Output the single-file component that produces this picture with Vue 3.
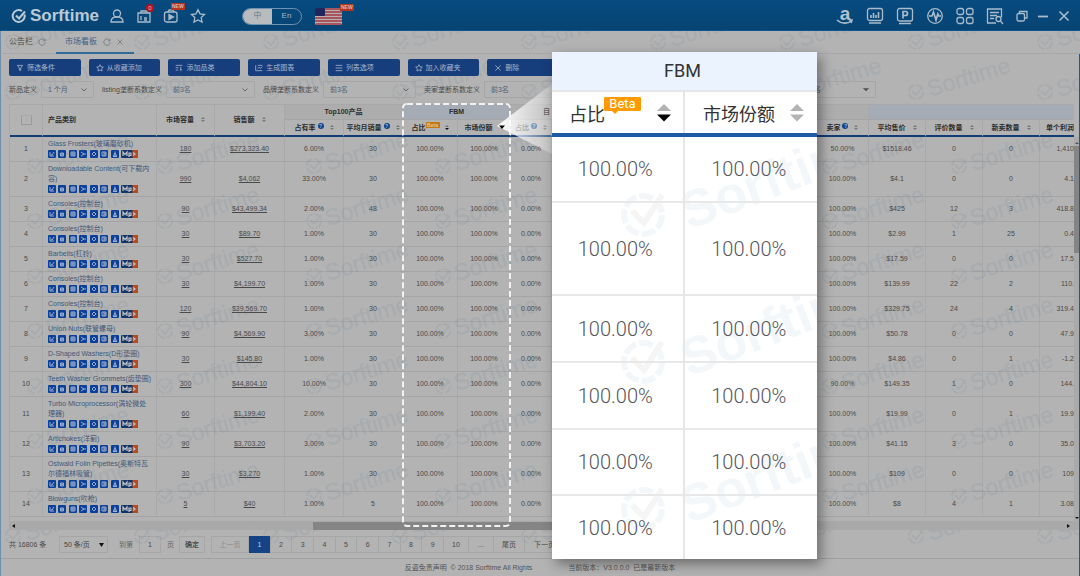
<script setup>
import { ref } from 'vue'

const lang = ref('zh')
const goPage = ref('1')

const tools = [
  { label: '筛选条件', icon: 'M2 2h8L7 6v4L5 9V6z' },
  { label: '从收藏添加', icon: 'M6 1l1.5 3.2 3.5.5-2.5 2.4.6 3.4L6 8.9l-3.1 1.6.6-3.4L1 4.7l3.5-.5z' },
  { label: '添加品类', icon: 'M1 2h10M1 5.500h4M1 9h4M8.500 4v6M8.500 10l2-2' },
  { label: '生成图表', icon: 'M1 2v8h10M4 2h7M4 7l2-2 2 1.500 3-2.500' },
  { label: '列表选项', icon: 'M1 2h10M1 6h10M1 10h10' },
  { label: '加入收藏夹', icon: 'M6 1l1.5 3.2 3.5.5-2.500 2.400.6 3.400L6 8.900l-3.100 1.600.6-3.400L1 4.700l3.500-.5z' },
  { label: '删除', icon: 'M2 2l8 8M10 2l-8 8' }
]

const filters = [
  { id: 'new', label: '新品定义', value: '1 个月', size: 'short' },
  { id: 'listing', label: 'listing垄断系数定义', value: '前3名', size: 'mid' },
  { id: 'brand', label: '品牌垄断系数定义', value: '前3名', size: 'long' },
  { id: 'seller', label: '卖家垄断系数定义', value: '前3名', size: 'long' }
]

const rows = [
  [['Glass Frosters(玻璃磨砂机)'], '180', '$273,323.40', '6.00%', '30', '50.00%', '$1518.46', '0', '0', '1,410'],
  [['Downloadable Content(可下载内', '容)'], '990', '$4,062', '33.00%', '30', '100.00%', '$4.1', '0', '0', '4.1'],
  [['Consoles(控制台)'], '90', '$43,499.34', '2.00%', '48', '100.00%', '$425', '12', '3', '418.8'],
  [['Consoles(控制台)'], '30', '$89.70', '1.00%', '30', '100.00%', '$2.99', '1', '25', '0.4'],
  [['Barbells(杠铃)'], '30', '$527.70', '1.00%', '30', '100.00%', '$17.59', '0', '0', '17.5'],
  [['Consoles(控制台)'], '30', '$4,199.70', '1.00%', '30', '100.00%', '$139.99', '22', '2', '110.'],
  [['Consoles(控制台)'], '120', '$39,569.70', '1.00%', '30', '100.00%', '$329.75', '24', '4', '319.4'],
  [['Union Nuts(联管螺母)'], '90', '$4,569.90', '3.00%', '30', '100.00%', '$50.78', '0', '0', '47.9'],
  [['D-Shaped Washers(D形垫圈)'], '30', '$145.80', '1.00%', '30', '100.00%', '$4.86', '0', '1', '-1.2'],
  [['Teeth Washer Grommets(齿垫圈)'], '300', '$44,804.10', '10.00%', '30', '90.00%', '$149.35', '1', '0', '144.'],
  [['Turbo Microprocessor(涡轮微处', '理器)'], '60', '$1,199.40', '2.00%', '30', '100.00%', '$19.99', '0', '1', '19.9'],
  [['Artichokes(洋蓟)'], '90', '$3,703.20', '3.00%', '30', '100.00%', '$41.15', '3', '0', '35.0'],
  [['Ostwald Folin Pipettes(奥斯特瓦', '尔德福林吸管)'], '30', '$3,270', '1.00%', '30', '100.00%', '$109', '0', '0', '109'],
  [['Blowguns(吹枪)'], '5', '$40', '1.00%', '5', '100.00%', '$8', '4', '1', '3.08']
]

const rowIcons = [
  'M2 2v4h4M3 4.500l1 .5 2-3',
  'M2.500 3h3v3h-3zM3 4h2M3 5h2',
  'M2 2h4v4H2zM2 4h4M4 2v4',
  'M2 2l3 2-3 2M4 4h3',
  'M4 2l2 2-2 2-2-2z',
  'M2 2h4v4H2zM4 2v4M4 4h2',
  'M4 1.500v3M2.500 6l1.500-3 1.500 3zM2 6.500h4'
]

const pages = [1, 2, 3, 4, 5, 6, 7, 8, 9]
const zoomRows = ['r66', 'r93', 'r67', 'r67', 'r66', 'r63']
</script>

<template>
  <div class="app">
    <svg class="defs" aria-hidden="true">
      <defs>
        <g id="wm-unit" opacity="0.08">
          <circle cx="12" cy="38" r="7" fill="none" stroke="#28587c" stroke-width="2" stroke-dasharray="9 2" />
          <path d="M8 37l4 4 7-9" fill="none" stroke="#28587c" stroke-width="2" />
          <text x="0" y="0" transform="translate(26 43) rotate(-17)" font-family="Liberation Sans, Arial, sans-serif" font-size="23" fill="#28587c" stroke="#28587c" stroke-width="0.500">Sorftime</text>
        </g>
        <pattern id="wm-left" x="13" y="-9" width="130" height="55" patternUnits="userSpaceOnUse"><use href="#wm-unit" /></pattern>
        <pattern id="wm-right" x="17" y="-9" width="129" height="55" patternUnits="userSpaceOnUse"><use href="#wm-unit" /></pattern>
        <pattern id="wm-tabs" x="0" y="-27" width="129" height="55" patternUnits="userSpaceOnUse"><use href="#wm-unit" /></pattern>
        <pattern id="wm-bar" x="0" y="0" width="129" height="55" patternUnits="userSpaceOnUse"><use href="#wm-unit" /></pattern>
        <pattern id="wm-pager" x="0" y="-32" width="129" height="55" patternUnits="userSpaceOnUse"><use href="#wm-unit" /></pattern>
        <pattern id="wm-zoom" x="0" y="0" width="400" height="147" patternUnits="userSpaceOnUse">
          <g opacity="0.06" fill="none" stroke="#28709c">
            <circle cx="91" cy="78" r="19" stroke-width="6" stroke-dasharray="14 3" />
            <path d="M80 74l12 12 18-28" stroke="#556" stroke-width="6" />
            <text transform="translate(137 93) rotate(-21)" font-family="Liberation Sans, Arial, sans-serif" font-weight="700" font-size="52" fill="#28709c" stroke="none">Sorftime</text>
          </g>
        </pattern>
      </defs>
    </svg>

    <header class="top">
      <div class="brand">
        <svg width="16" height="16" viewBox="0 0 16 16" fill="none" stroke="#bccad5" stroke-width="2">
          <path d="M13.500 6.500A6 6 0 1 1 11 3" /><path d="M5 7.500l3 3 6-7" />
        </svg>
        <span class="brand-name">Sorftime</span>
      </div>
      <nav class="quick" aria-label="快捷入口">
        <button type="button" aria-label="用户">
          <svg width="16" height="16" viewBox="0 0 16 16"><circle cx="8" cy="5.500" r="3.500" /><path d="M2 14c0-3 2-4.500 4-5h4c2 .5 4 2 4 5z" /></svg>
        </button>
        <button type="button" aria-label="消息">
          <svg width="16" height="16" viewBox="0 0 16 16"><path d="M2 5h12v9H2zM5 5V3h6v2M5 8v4M8 10h3M8 12h3" /></svg>
          <span class="count">0</span>
        </button>
        <button type="button" aria-label="视频">
          <svg width="16" height="16" viewBox="0 0 16 16"><rect x="1.500" y="4" width="12.500" height="10" rx="2" /><path d="M5 4l1-2h4l1 2" /><path d="M6 6.500l4.500 2.500L6 11.500z" fill="#a9bccb" /></svg>
          <span class="new">NEW</span>
        </button>
        <button type="button" aria-label="收藏">
          <svg width="16" height="16" viewBox="0 0 16 16"><path d="M8 1.800l2 4.100 4.500.6-3.300 3.100.8 4.400L8 11.900 4 14l.8-4.400L1.500 6.500 6 5.900z" /></svg>
        </button>
      </nav>
      <div class="lang">
        <button type="button" :class="{ on: lang === 'zh' }" @click="lang = 'zh'">中</button>
        <button type="button" :class="{ on: lang === 'en' }" @click="lang = 'en'">En</button>
      </div>
      <button type="button" class="flag" aria-label="美国站">
        <svg width="27" height="17" viewBox="0 0 27 17">
          <rect width="27" height="17" rx="2" fill="#b6b0b2" />
          <path d="M1 1h25M0 4h27M0 7h27M0 10h27M0 13h27M1 16h25" stroke="#a5343f" stroke-width="1.500" />
          <rect width="10" height="8" rx="1" fill="#20265c" />
        </svg>
        <span class="new">NEW</span>
      </button>
      <nav class="apps" aria-label="工具">
        <button type="button" aria-label="Amazon">
          <span class="amz">a</span>
          <svg class="smile" width="18" height="6" viewBox="0 0 18 6"><path d="M1 1c4 4 11 4 14 1M13 1l3 0-1 3" /></svg>
        </button>
        <button type="button" aria-label="图表"><svg width="18" height="18" viewBox="0 0 18 18"><rect x="1.500" y="1.500" width="15" height="12" rx="2" /><path d="M3 16h12M5 11V8M7.500 11V6M10 11V8M12.500 11V5" stroke-width="1.600" /></svg></button>
        <button type="button" aria-label="产品"><svg width="18" height="18" viewBox="0 0 18 18"><rect x="1.500" y="1.500" width="15" height="12.500" rx="2" /><path d="M3 16.500h12M7 11.500V4.500h2.500a2 2 0 0 1 0 4H7" stroke-width="1.700" /></svg></button>
        <button type="button" aria-label="监控"><svg width="18" height="18" viewBox="0 0 18 18"><circle cx="9" cy="9" r="7.300" /><path d="M3 9h3l1.500-4L10 13l1.800-6 1 2H15" stroke-width="1.700" /></svg></button>
        <button type="button" aria-label="应用"><svg width="18" height="18" viewBox="0 0 18 18"><rect x="1" y="1.500" width="6.500" height="6" rx="2" /><rect x="10.500" y="1.500" width="6.500" height="6" rx="2" /><rect x="1" y="10.500" width="6.500" height="6" rx="2" /><rect x="10.500" y="10.500" width="6.500" height="6" rx="2" /></svg></button>
        <button type="button" aria-label="查询"><svg width="18" height="18" viewBox="0 0 18 18"><path d="M15.500 10V2h-14v14H10M4 5.500h9M4 8.500h7M4 11.500h4" /><circle cx="12.500" cy="12" r="2.500" /><path d="M14.500 14l2.500 3" /></svg></button>
      </nav>
      <div class="win">
        <button type="button" aria-label="还原"><svg width="12" height="12" viewBox="0 0 12 12"><rect x="1" y="3.500" width="7.500" height="7.500" rx="1.500" /><path d="M3.500 3.500V1.500h7.500V8H9" /></svg></button>
        <button type="button" aria-label="最小化"><svg width="12" height="12" viewBox="0 0 12 12"><path d="M1 6.500h10" stroke-width="1.800" /></svg></button>
        <button type="button" aria-label="关闭"><svg width="12" height="12" viewBox="0 0 12 12"><path d="M1.500 1.500l9 9M10.500 1.500l-9 9" stroke-width="1.600" /></svg></button>
      </div>
    </header>

    <nav class="tabs" aria-label="标签页">
      <svg class="wm" aria-hidden="true"><rect width="100%" height="100%" fill="url(#wm-tabs)" stroke="none" /></svg>
      <button type="button" class="tab">
        公告栏
        <svg width="8" height="8" viewBox="0 0 8 8"><path d="M6.800 2.500A3.200 3.200 0 1 0 7.200 4.500M7 .8v2H5" /></svg>
      </button>
      <button type="button" class="tab active">
        市场看板
        <svg width="8" height="8" viewBox="0 0 8 8"><path d="M6.800 2.500A3.200 3.200 0 1 0 7.200 4.500M7 .8v2H5" /></svg>
        <svg width="6" height="6" viewBox="0 0 6 6"><path d="M.5.5l5 5M5.500.5l-5 5" /></svg>
      </button>
    </nav>

    <main class="main">
      <section class="controls">
        <svg class="wm" aria-hidden="true"><rect width="100%" height="100%" fill="url(#wm-bar)" /></svg>
        <div class="tools">
          <button v-for="t in tools" :key="t.label" type="button">
            <svg width="8" height="8" viewBox="0 0 12 12"><path :d="t.icon" /></svg>{{ t.label }}
          </button>
        </div>
        <form class="filters" @submit.prevent>
          <div v-for="f in filters" :key="f.id" class="field">
            <label :for="f.id">{{ f.label }}</label>
            <span class="pick" :class="f.size">
              <select :id="f.id"><option>{{ f.value }}</option></select>
              <svg width="6" height="4" viewBox="0 0 6 4"><path d="M.5.5L3 3 5.500.5" /></svg>
            </span>
          </div>
          <span class="pick last">
            <select aria-label="系数定义"><option>前3名</option></select>
            <svg width="6" height="4" viewBox="0 0 6 4"><path d="M.5.5L3 3 5.500.5z" fill="#555" /></svg>
          </span>
        </form>
      </section>

      <section class="grid">
        <div class="grid-view">
          <table>
            <colgroup>
              <col class="c33" /><col class="c114" /><col class="c58" /><col class="c70" />
              <col class="c59" /><col class="c59" /><col class="c55" /><col class="c53" /><col class="c41" /><col />
              <col class="c52" /><col class="c57" /><col class="c57" /><col class="c57" /><col class="c34" />
            </colgroup>
            <thead>
              <tr class="groups">
                <th rowspan="2"><input type="checkbox" aria-label="全选" /></th>
                <th rowspan="2" class="left">产品类别</th>
                <th rowspan="2">市场容量<i class="sort"></i></th>
                <th rowspan="2">销售额<i class="sort"></i></th>
                <th colspan="2" class="gray">Top100产品</th>
                <th colspan="2" class="blue">FBM</th>
                <th colspan="3" class="gray own">自</th>
                <th colspan="4" class="blue"></th>
              </tr>
              <tr class="subs">
                <th>占有率<b class="tip">?</b><i class="sort"></i></th>
                <th>平均月销量<b class="tip">?</b><i class="sort"></i></th>
                <th>占比<b class="mini-beta">Beta</b><i class="sort down"></i></th>
                <th>市场份额<i class="sort under"></i></th>
                <th>占比<b class="tip">?</b><i class="sort"></i></th>
                <th></th>
                <th>卖家<b class="tip">?</b><i class="sort"></i></th>
                <th>平均售价<i class="sort"></i></th>
                <th>评价数量<i class="sort"></i></th>
                <th>新卖数量<i class="sort"></i></th>
                <th class="profit">单个利润</th>
              </tr>
            </thead>
            <tbody>
              <tr v-for="(r, i) in rows" :key="i">
                <td>{{ i + 1 }}</td>
                <td class="cat">
                  <a href="#"><span v-for="line in r[0]" :key="line">{{ line }}</span></a>
                  <div class="marks">
                    <svg v-for="(d, k) in rowIcons" :key="k" width="8" height="8" viewBox="0 0 8 8">
                      <rect width="8" height="8" rx="1" fill="#0b409a" /><path :d="d" fill="none" stroke="#a9b9d2" stroke-width="0.900" />
                    </svg>
                    <svg width="17" height="8" viewBox="0 0 17 8">
                      <rect width="17" height="8" rx="1" fill="#143567" />
                      <path d="M11.500 0H16a1 1 0 0 1 1 1v6a1 1 0 0 1-1 1h-4.500z" fill="#b64a20" />
                      <path d="M2 6V2l2 2.500L6 2v4M8 7V3h2v2.500H8M12 2.500l2 1.500-2 1.500" fill="none" stroke="#c4c8ce" stroke-width="1.200" />
                    </svg>
                  </div>
                </td>
                <td><a href="#" class="num">{{ r[1] }}</a></td>
                <td><a href="#" class="num">{{ r[2] }}</a></td>
                <td>{{ r[3] }}</td>
                <td>{{ r[4] }}</td>
                <td>100.00%</td>
                <td>100.00%</td>
                <td>0.00%</td>
                <td></td>
                <td v-for="n in 5" :key="n" :class="{ profit: n === 5 }">{{ r[n + 4] }}</td>
              </tr>
            </tbody>
          </table>
          <svg class="wm wm-l" aria-hidden="true"><rect width="100%" height="100%" fill="url(#wm-left)" /></svg>
          <svg class="wm wm-r" aria-hidden="true"><rect width="100%" height="100%" fill="url(#wm-right)" /></svg>
        </div>
        <div class="vbar"><i class="tri up"></i><span></span><i class="tri dn"></i></div>
      </section>
      <div class="hbar"><i class="tri lt"></i><span></span><i class="tri rt"></i></div>

      <section class="pager">
        <svg class="wm" aria-hidden="true"><rect width="100%" height="100%" fill="url(#wm-pager)" /></svg>
        <span class="total">共 16806 条</span>
        <span class="pick per">
          <select aria-label="每页条数"><option>50 条/页</option></select>
          <svg width="5" height="4" viewBox="0 0 5 4"><path d="M0 0h5L2.500 4z" fill="#111" stroke="none" /></svg>
        </span>
        <label for="go">到第</label>
        <input id="go" v-model="goPage" type="text" />
        <span class="unit">页</span>
        <button type="button" class="ok">确定</button>
        <div class="pages">
          <button type="button" class="prev" disabled>上一页</button>
          <div class="nums">
            <button v-for="p in pages" :key="p" type="button" :class="{ cur: p === 1 }">{{ p }}</button>
          </div>
          <button type="button" class="w25">10</button>
          <button type="button" class="w25">…</button>
          <button type="button" class="w31">尾页</button>
          <button type="button" class="w40">下一页</button>
        </div>
      </section>
    </main>

    <footer class="foot">
      <span>反盗免责声明&nbsp; © 2018 Sorftime All Rights</span>
      <span>当前版本：V3.0.0.0&nbsp; 已是最新版本</span>
    </footer>

    <svg class="callout" width="150" height="426" viewBox="0 0 150 426" aria-hidden="true">
      <defs>
        <linearGradient id="beam" x1="0" x2="1" y1="0" y2="0">
          <stop offset="0" stop-color="#fff" stop-opacity="1" /><stop offset="0.300" stop-color="#fff" stop-opacity="0.750" /><stop offset="1" stop-color="#fff" stop-opacity="0.200" />
        </linearGradient>
      </defs>
      <rect x="1" y="2" width="107" height="422" rx="4" fill="none" stroke="#f2f2f2" stroke-width="2" stroke-dasharray="6 3" />
      <path d="M95 24L150-18V52z" fill="url(#beam)" />
      <path d="M97 23.500h6L100 27z" fill="#000" />
    </svg>

    <aside class="zoom" aria-label="FBM">
      <svg class="wm" aria-hidden="true"><rect width="100%" height="100%" fill="url(#wm-zoom)" /></svg>
      <table>
        <thead>
          <tr><th colspan="2" class="ztitle">FBM</th></tr>
          <tr>
            <th class="zh"><div class="zcell first"><span>占比</span><b class="beta">Beta</b><svg width="14" height="18" viewBox="0 0 14 18"><path d="M0 7L7 0l7 7z" fill="#b3b3b3" /><path d="M0 10.500h14l-7 7z" fill="#000" /></svg></div></th>
            <th class="zh"><div class="zcell"><span>市场份额</span><svg width="14" height="18" viewBox="0 0 14 18"><path d="M0 7L7 0l7 7zM0 10.500h14l-7 7z" fill="#b3b3b3" /></svg></div></th>
          </tr>
        </thead>
        <tbody>
          <tr v-for="(h, i) in zoomRows" :key="i" :class="h"><td>100.00%</td><td>100.00%</td></tr>
        </tbody>
      </table>
    </aside>
  </div>
</template>

<style>
html, body { background: #b3b3b3; }
body { overflow: hidden; }
</style>

<style scoped>
.app {
  position: relative;
  display: flex;
  flex-direction: column;
  min-height: 100vh;
  box-sizing: border-box;
  background: #b3b3b3;
  color: #4a4a4a;
  font: 7px/10px "Liberation Sans", "Noto Sans CJK SC", sans-serif;
  overflow: hidden;
}
.app * { box-sizing: border-box; }
button, select, input { font: inherit; color: inherit; margin: 0; padding: 0; border: 0; background: none; }
button { cursor: pointer; white-space: nowrap; }
a { color: inherit; text-decoration: none; }
svg { display: block; flex: none; }
.defs { position: absolute; width: 0; height: 0; }
.wm { position: absolute; inset: 0; width: 100%; height: 100%; pointer-events: none; }

.top {
  display: flex;
  align-items: center;
  height: 31px;
  padding: 2px 10px 0 11px;
  background: linear-gradient(#074b80, #074473);
  border-bottom: 1px solid #0d5590;
}
.top svg { fill: none; stroke: #a9bccb; stroke-width: 1.3px; }
.top button { position: relative; display: flex; align-items: center; justify-content: center; }
.brand { display: flex; align-items: center; gap: 3px; width: 98px; }
.top .brand svg { stroke: #bccad5; stroke-width: 2px; }
.brand-name { font-size: 17px; line-height: 20px; font-weight: 700; color: #bccad5; }
.quick { display: flex; gap: 11px; }
.quick .count {
  position: absolute; left: 10px; top: -4px; width: 8px; height: 8px; border-radius: 4px;
  background: #b8131d; color: #d8c0c2; font-size: 6px; line-height: 8px; text-align: center;
}
.new {
  position: absolute; left: 8px; top: -5px; padding: 0 1px; background: #b5361f;
  color: #dcb9b0; font-size: 5px; line-height: 7px; font-weight: 700;
}
.lang { display: flex; width: 60px; height: 17px; margin-left: 36px; border: 1px solid #6f93b1; border-radius: 9px; overflow: hidden; color: #a3b7c8; }
.lang button { flex: 1; font-size: 8px; }
.lang .on { background: #b9bcbf; color: #6a7a88; }
.flag { margin-left: 13px; }
.top .flag svg { stroke: none; }
.flag .new { left: 25px; top: -4px; }
.apps { display: flex; gap: 12px; margin-left: auto; }
.apps button { width: 18px; height: 18px; }
.apps .amz { font-size: 19px; line-height: 14px; font-weight: 700; color: #b3c3d0; padding-bottom: 5px; }
.apps .smile { position: absolute; left: 0; bottom: 0; stroke-width: 1.6px; }
.win { display: flex; gap: 9px; margin-left: 12px; }

.tabs { position: relative; display: flex; height: 23px; padding-left: 8px; border-bottom: 1px solid #a8a8a8; border-left: 1px solid #6d8faa; }
.tabs svg { fill: none; stroke: #6f767c; stroke-width: 0.8px; }
.tab { position: relative; display: flex; align-items: center; gap: 5px; width: 47px; font-size: 8px; color: #4c4c4c; }
.tab.active { width: 78px; gap: 6px; padding-left: 9px; color: #3c6288; border-bottom: 2px solid #2f6c9c; }
.tab.active { height: 23px; }

.main { display: flex; flex-direction: column; border-left: 1px solid #6d8faa; border-right: 1px solid #2a577e; }
.controls { position: relative; padding: 5px 8px 6px; }
.tools { position: relative; display: flex; gap: 8px; width: 550px; }
.tools button {
  display: flex; flex: 1; align-items: center; gap: 3px; height: 17px; padding-left: 7px;
  border-radius: 2px; background: #163d7c; color: #a9b6cb;
}
.tools svg { fill: none; stroke: #a9b6cb; stroke-width: 1.2px; }
.filters { position: relative; display: flex; gap: 8px; height: 17px; margin-top: 5px; }
.field { display: flex; align-items: center; gap: 4px; white-space: nowrap; }
.pick { position: relative; display: flex; align-items: center; height: 17px; border: 1px solid #a6a6a6; border-radius: 1px; color: #4d6278; }
.pick select { appearance: none; width: 100%; height: 100%; padding-left: 6px; outline: 0; }
.pick svg { position: absolute; right: 6px; top: 6px; fill: none; stroke: #666; pointer-events: none; }
.short { width: 53px; }
.mid { width: 89px; }
.long { width: 93px; }
.last { width: 80px; margin-left: 211px; }

.grid { display: flex; margin-left: 8px; }
.grid-view { position: relative; flex: 1; min-width: 0; padding-bottom: 4px; overflow: hidden; border-left: 1px solid #a8a8a8; }
.grid table { width: 100%; table-layout: fixed; border-collapse: separate; border-spacing: 0; }
.c33 { width: 33px; } .c114 { width: 114px; } .c58 { width: 58px; } .c70 { width: 70px; }
.c59 { width: 59px; } .c55 { width: 55px; } .c53 { width: 53px; } .c41 { width: 41px; }
.c52 { width: 52px; } .c57 { width: 57px; } .c34 { width: 34px; }
.grid th, .grid td { padding: 0; text-align: center; white-space: nowrap; border-right: 1px solid #a9a9a9; border-bottom: 1px solid #a5a5a5; }
.grid th { color: #2c2c2c; font-weight: 700; border-top: 0; }
.groups { height: 16px; }
.groups th { border-top: 1px solid #a8a8a8; }
.subs { height: 17px; }
.subs th, .groups th[rowspan] { border-bottom: 2px solid #133c76; }
.grid th.left { text-align: left; padding-left: 5px; }
.grid th.gray { background: #adadad; }
.grid th.blue { background: #a5acb5; }
.grid th.own { text-align: left; padding-left: 32px; }
.grid th.profit, .grid td.profit { text-align: right; border-right: 0; }
.grid input { appearance: none; display: block; width: 11px; height: 10px; margin: 0 auto; border: 1px solid #9b9b9b; border-top-color: #aaa; }
.tip {
  display: inline-block; width: 6px; height: 6px; margin-left: 2px; border-radius: 3px;
  background: #0d428c; color: #b3c0d4; font-size: 5px; line-height: 6px; vertical-align: 2px;
}
.sort { display: inline-block; width: 4px; height: 7px; margin-left: 7px; vertical-align: -1px; position: relative; }
.tip + .sort { margin-left: 6px; }
.sort::before, .sort::after { content: ""; position: absolute; left: 0; border: 2px solid transparent; }
.sort::before { top: -1px; border-bottom-color: #777; }
.sort::after { bottom: -1px; border-top-color: #777; }
.sort.down::after { border-top-color: #111; }
.sort.under { visibility: hidden; }
.mini-beta { display: inline-block; width: 14px; height: 6px; background: #c47a10; color: #d9c6a4; font-size: 5px; line-height: 6px; vertical-align: 3px; }
.mini-beta + .sort { margin-left: 5px; }
.grid tbody tr { height: 25px; }
.grid tbody td.cat { padding: 2px 0 2px 5px; text-align: left; color: #3f587a; }
.cat span { display: block; line-height: 10px; }
.marks { display: flex; justify-content: space-between; width: 90px; height: 8px; margin-top: 1px; margin-bottom: 1px; }
.num { text-decoration: underline; }
.grid .wm { top: 33px; height: calc(100% - 33px); }
.grid .wm-l { width: 274px; }
.grid .wm-r { left: 275px; width: calc(100% - 275px); }
.vbar { display: flex; flex-direction: column; align-items: center; width: 5px; padding: 38px 0 2px; background: linear-gradient(transparent 33px, #aaa 33px); }
.vbar span { width: 5px; height: 107px; margin: 2px 0 auto; background: #858585; }
.hbar { display: flex; align-items: center; justify-content: space-between; height: 9px; margin-left: 8px; padding: 0 9px 0 3px; background: #a9a9a9; }
.hbar span { width: 480px; height: 8px; margin-left: 298px; margin-right: auto; background: #858585; }
.tri { width: 0; height: 0; border: 2px solid transparent; }
.up { border-bottom-color: #555; border-top: 0; }
.dn { border-top-color: #111; border-bottom: 0; }
.lt { border-right: 3px solid #111; border-left: 0; }
.rt { border-left: 3px solid #111; border-right: 0; }

.pager { position: relative; display: flex; align-items: center; padding: 6px 8px 5px; border-bottom: 1px solid #a0a0a0; white-space: nowrap; }
.pager > * { flex: none; }
.pager .total { width: 50px; }
.pager .per { width: 49px; margin-right: 11px; color: #444; }
.pager .per select { padding-left: 4px; }
.pager .per svg { right: 3px; }
.pager label { width: 20px; color: #666; }
.pager > input { width: 22px; height: 17px; border: 1px solid #a6a6a6; text-align: center; outline: 0; }
.pager .unit { width: 18px; padding-left: 6px; color: #666; }
.pager .ok { width: 26px; height: 17px; border: 1px solid #a6a6a6; border-radius: 1px; color: #222; }
.pages { display: flex; height: 17px; margin-left: 6px; border: 1px solid #a6a6a6; }
.pages button { border-right: 1px solid #a6a6a6; }
.pages .prev { width: 37px; color: #8a8a8a; }
.nums { display: flex; width: 195px; }
.nums button { flex: 1; }
.nums .cur { margin: -1px 0; background: #164386; color: #c3cfe0; }
.w25 { width: 25px; } .w31 { width: 31px; } .w40 { width: 40px; }

.foot { display: flex; flex: 1; align-items: center; justify-content: center; gap: 36px; min-height: 17px; border-left: 1px solid #6d8faa; border-right: 1px solid #2a577e; color: #555; }

.callout { position: absolute; left: 402px; top: 102px; overflow: visible; pointer-events: none; }

.zoom { position: absolute; left: 552px; top: 52px; width: 265px; background: #fff; box-shadow: 4px 5px 12px rgba(0, 0, 0, 0.4); color: #333; overflow: hidden; }
.zoom .wm { top: 85px; height: calc(100% - 85px); }
.zoom table { position: relative; width: 100%; table-layout: fixed; border-collapse: separate; border-spacing: 0; }
.zoom th, .zoom td { padding: 0; text-align: center; font-weight: 400; }
.zoom tr > :first-child:not([colspan]) { border-right: 2px solid #e6e6e6; }
.zoom .ztitle { height: 40px; padding-right: 4px; background: #eaf3ff; border-bottom: 2px solid #e6e6e6; font: 400 18px/24px Roboto, sans-serif; }
.zoom .zh { height: 45px; border-bottom: 4px solid #1e59a8; font: 400 18px/24px "Noto Sans CJK SC", sans-serif; }
.zoom tr > .zh:first-child { border-right: 0; box-shadow: inset -2px 0 #e6e6e6; }
.zcell { display: flex; align-items: center; justify-content: flex-end; gap: 15px; padding-right: 13px; }
.zcell.first { gap: 0; padding: 0 14px 0 17px; }
.beta { position: relative; align-self: flex-start; width: 37px; height: 14px; margin: -4px auto 0 -1px; background: #ff9b00; border-radius: 1px; color: #fff; font: 400 13px/14px Roboto, sans-serif; text-align: center; }
.beta::after { content: ""; position: absolute; left: 8px; top: 14px; border: 3px solid transparent; border-top-color: #ff9b00; border-bottom: 0; }
.zoom td { padding-right: 4px; border-bottom: 2px solid #e8e8e8; color: #55555c; font: 300 20px/24px Roboto, sans-serif; }
.zoom tr:last-child td { border-bottom: 0; }
.r66 { height: 66px; } .r93 { height: 93px; } .r67 { height: 67px; } .r63 { height: 63px; }
</style>
